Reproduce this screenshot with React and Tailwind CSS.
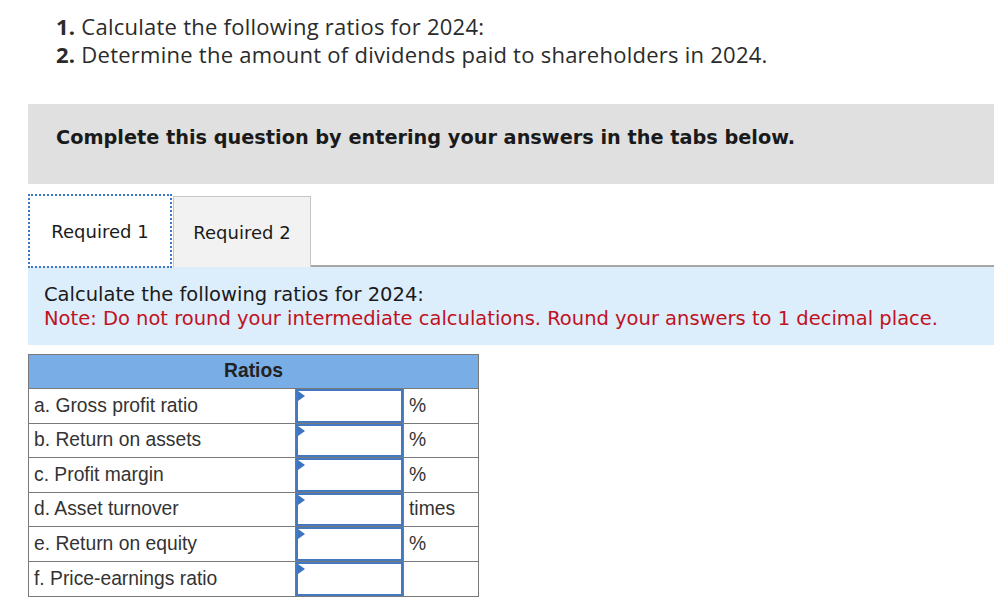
import React from "react";

const rows = [
  { label: "a. Gross profit ratio", unit: "%" },
  { label: "b. Return on assets", unit: "%" },
  { label: "c. Profit margin", unit: "%" },
  { label: "d. Asset turnover", unit: "times" },
  { label: "e. Return on equity", unit: "%" },
  { label: "f. Price-earnings ratio", unit: "" },
];

const InputCell = () => (
  <div className="relative h-full border-2 border-[#4479c0] bg-white">
    <span className="absolute left-0 top-0 w-0 h-0 border-y-[5px] border-y-transparent border-l-[7px] border-l-[#3a74c2]" />
  </div>
);

export default function App() {
  return (
    <div className="w-[994px] h-[606px] bg-white overflow-hidden">
      <div className="pl-[56px] pt-[12px] text-[22px] leading-[28px] tracking-[0.25px] text-[#2b2b2b] font-[family-name:'Open_Sans',sans-serif]">
        <p>
          <b>1.</b> Calculate the following ratios for 2024:
        </p>
        <p>
          <b>2.</b> Determine the amount of dividends paid to shareholders in 2024.
        </p>
      </div>

      <div className="ml-[28px] mt-[36px] h-[80px] bg-[#e0e0e0] flex items-center pl-[28px] pb-[12px]">
        <p className="font-[family-name:'DejaVu_Sans',Verdana,sans-serif] font-bold text-[19.3px] text-[#1a1a1a]">
          Complete this question by entering your answers in the tabs below.
        </p>
      </div>

      <div className="ml-[28px] mt-[10px] flex items-end h-[73px]">
        <div className="w-[144px] h-[74px] p-[2px] border-2 border-dotted border-[#3b78c8] relative z-10 -mb-[1px]">
          <div className="h-full flex items-center justify-center bg-white font-[family-name:'DejaVu_Sans',Verdana,sans-serif] text-[18px] text-[#1a1a1a]">
            Required 1
          </div>
        </div>
        <div className="w-[138px] h-[71px] bg-[#f2f2f2] border border-[#c6c6c6] border-b-0 flex items-center justify-center font-[family-name:'DejaVu_Sans',Verdana,sans-serif] text-[18px] text-[#1a1a1a] ml-[1px]">
          Required 2
        </div>
        <div className="flex-1 border-b-2 border-[#a6a6a6]" />
      </div>

      <div className="ml-[28px] h-[78px] bg-[#dcedfb] pl-[16px] pt-[16px] font-[family-name:'DejaVu_Sans',sans-serif] text-[19.5px] leading-[24px]">
        <p className="text-[#1a1a1a]">Calculate the following ratios for 2024:</p>
        <p className="text-[#c0121f]">
          Note: Do not round your intermediate calculations. Round your answers to 1 decimal place.
        </p>
      </div>

      <div className="ml-[28px] mt-[9px] w-[451px] border border-[#7a7a7a] font-[family-name:'Liberation_Sans',Arial,sans-serif] text-[19.3px] text-[#333]">
        <div className="h-[34px] bg-[#79ade6] border-b border-[#7a7a7a] flex items-center justify-center font-bold text-[#222]">
          Ratios
        </div>
        {rows.map((r, i) => (
          <div
            key={r.label}
            className={`grid grid-cols-[267px_107px_1fr] h-[34.5px] ${i < rows.length - 1 ? "border-b border-[#7a7a7a]" : ""}`}
          >
            <div className="flex items-center pl-[5px] pt-[1px] border-r border-[#7a7a7a]">{r.label}</div>
            <InputCell />
            <div className="flex items-center pl-[5px] pt-[1px] border-l border-[#7a7a7a]">{r.unit}</div>
          </div>
        ))}
      </div>
    </div>
  );
}
